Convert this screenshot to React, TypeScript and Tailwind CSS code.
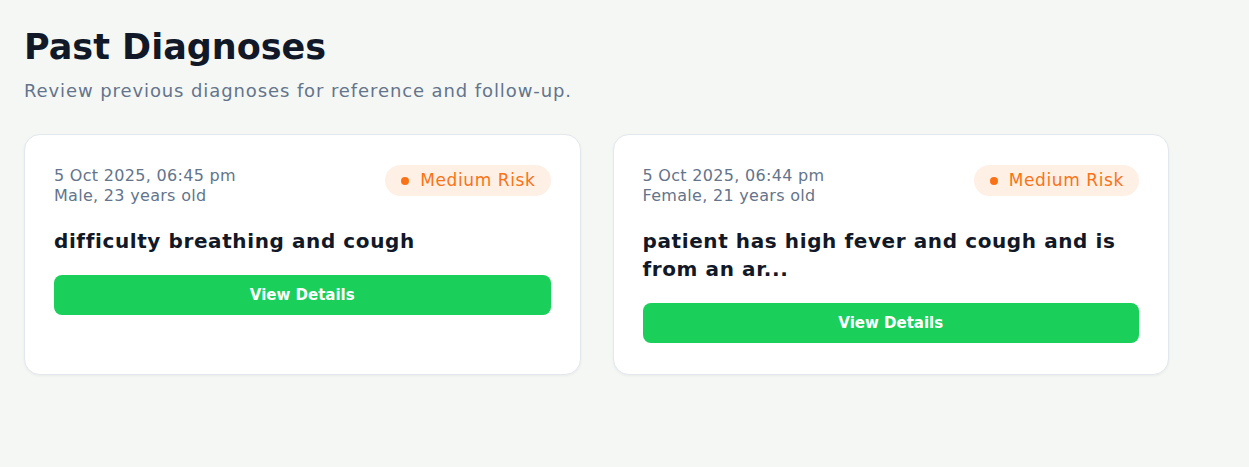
import React from "react";

interface Diagnosis {
    date: string;
    patient: string;
    risk: string;
    symptoms: string;
}

const diagnoses: Diagnosis[] = [
    {
        date: "5 Oct 2025, 06:45 pm",
        patient: "Male, 23 years old",
        risk: "Medium Risk",
        symptoms: "difficulty breathing and cough",
    },
    {
        date: "5 Oct 2025, 06:44 pm",
        patient: "Female, 21 years old",
        risk: "Medium Risk",
        symptoms: "patient has high fever and cough and is from an ar...",
    },
];

const DiagnosisCard: React.FC<{ item: Diagnosis }> = ({ item }) => {
    return (
        <div className="bg-white border border-[#e3e8ee] rounded-2xl p-[29px] pb-[31px] shadow-[0_1px_3px_rgba(0,0,0,0.05)]">
            <div className="flex justify-between items-start">
                <div className="text-[16px] leading-5 tracking-[0.3px] text-[#64748b] pt-[2px]">
                    <p>{item.date}</p>
                    <p>{item.patient}</p>
                </div>
                <span className="flex items-center gap-[11px] bg-[#fff0e6] text-[#f97316] text-[17px] tracking-[0.6px] rounded-full pl-4 pr-[15px] h-[31px] mt-px">
                    <span className="w-2 h-2 rounded-full bg-[#f97316]" />
                    {item.risk}
                </span>
            </div>
            <h3 className="text-[20px] leading-7 tracking-[0.6px] font-bold text-[#111827] mt-[21px]">{item.symptoms}</h3>
            <button className="w-full h-10 mt-5 bg-[#1ad05a] text-white text-[15px] font-bold rounded-lg">
                View Details
            </button>
        </div>
    );
};

export default function App() {
    return (
        <div
            className="min-h-[467px] bg-[#f5f7f5] px-6 pt-[27px]"
            style={{ fontFamily: "'DejaVu Sans', sans-serif" }}
        >
            <h1 className="text-[35px] leading-10 font-bold text-[#111827]">Past Diagnoses</h1>
            <p className="text-[18px] leading-7 tracking-[0.9px] text-[#64748b] mt-2.5">
                Review previous diagnoses for reference and follow-up.
            </p>
            <div className="grid grid-cols-2 gap-8 w-[1145px] mt-[29px]">
                {diagnoses.map((d, i) => (
                    <DiagnosisCard key={i} item={d} />
                ))}
            </div>
        </div>
    );
}
